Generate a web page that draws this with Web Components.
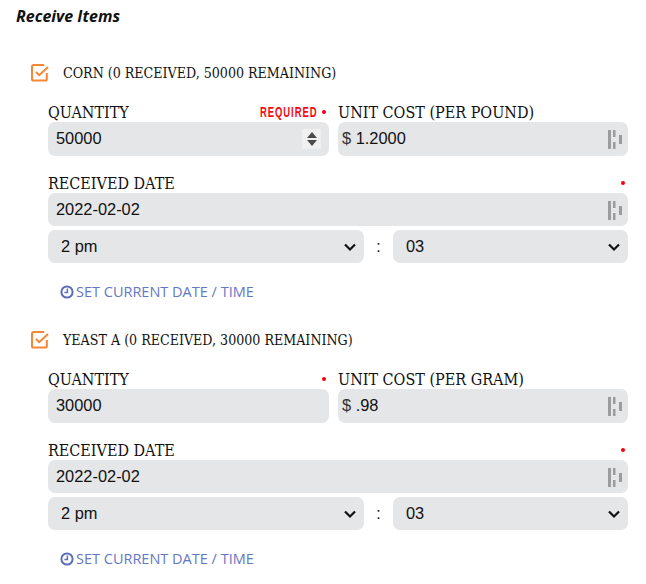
<!DOCTYPE html>
<html>
<head>
<meta charset="utf-8">
<title>Receive Items</title>
<style>
  html, body { margin: 0; background: #fff; }
  body { width: 646px; height: 584px; overflow: hidden; }
</style>
</head>
<body>
<receive-form heading="Receive Items">
  <receive-item name="CORN (0 RECEIVED, 50000 REMAINING)" qty="50000" cost="1.2000" unit="UNIT COST (PER POUND)" required-note spinner></receive-item>
  <receive-item name="YEAST A (0 RECEIVED, 30000 REMAINING)" qty="30000" cost=".98" unit="UNIT COST (PER GRAM)"></receive-item>
</receive-form>

<script>
const SLAB = `"DejaVu Serif", serif`;
const keyIcon = `<svg class="key" width="15" height="19" viewBox="0 0 15 19"><g fill="#9c9c9c"><rect x="0" y="0" width="3" height="19"/><rect x="5" y="0" width="2.5" height="7"/><rect x="5" y="12" width="2.5" height="7"/><rect x="11" y="5" width="3" height="9"/></g></svg>`;

class FieldLabel extends HTMLElement {
  constructor() {
    super();
    this.attachShadow({ mode: 'open' });
    this.shadowRoot.innerHTML = `
      <style>
        :host { display: flex; justify-content: space-between; align-items: center; height: 20px; }
        .name { margin-top: 2px; font: 16px/20px ${SLAB}; font-stretch: condensed; color: #111; white-space: nowrap; }
        .req { display: flex; align-items: center; gap: 4px; padding-right: 3px; color: #f50a14; }
        .note { display: inline-block; font: 700 15.5px/20px "Liberation Sans", sans-serif; letter-spacing: 1.6px; transform: scaleX(.61); transform-origin: right center; }
        .dot { width: 4px; height: 4px; border-radius: 50%; background: #f5000a; }
      </style>
      <span class="name"><slot></slot></span>
      <span class="req"></span>
    `;
  }

  connectedCallback() {
    const req = this.shadowRoot.querySelector('.req');
    if (this.hasAttribute('note')) {
      req.innerHTML = `<span class="note">${this.getAttribute('note')}</span><span class="dot"></span>`;
    } else if (this.hasAttribute('dot')) {
      req.innerHTML = `<span class="dot"></span>`;
    }
  }
}

class FieldBox extends HTMLElement {
  constructor() {
    super();
    this.attachShadow({ mode: 'open' });
    this.shadowRoot.innerHTML = `
      <style>
        :host {
          display: flex; align-items: center; justify-content: space-between;
          box-sizing: border-box; height: 33px; padding: 0 8px;
          background: #e5e6e8; border-radius: 7px;
          font: 16.4px "Liberation Sans", sans-serif; color: #111;
        }
        :host([tall]) { height: 34px; padding-bottom: 2px; }
        :host([select]) { padding-left: 13px; }
        :host([money]) { padding-left: 4px; }
        .end { display: flex; align-items: center; }
        .spin { display: flex; flex-direction: column; align-items: center; justify-content: center; gap: 2px; width: 19px; height: 20px; background: #f0f0f0; margin-top: 2px; }
        .up, .down { width: 0; height: 0; border-left: 5px solid transparent; border-right: 5px solid transparent; }
        .up { border-bottom: 6px solid #4b4b4b; }
        .down { border-top: 6px solid #4b4b4b; }
        .key { display: block; margin: 2px -3px 0 0; }
        .chev { display: block; margin: 0 -2px 0 0; }
      </style>
      <span><slot></slot></span>
      <span class="end"></span>
    `;
  }

  connectedCallback() {
    const end = this.shadowRoot.querySelector('.end');
    if (this.hasAttribute('spinner')) {
      end.innerHTML = `<span class="spin"><span class="up"></span><span class="down"></span></span>`;
    } else if (this.hasAttribute('select')) {
      end.innerHTML = `<svg class="chev" width="16" height="16" viewBox="0 0 16 16"><path d="M3 5.5l5 5 5-5" fill="none" stroke="#111" stroke-width="2.2"/></svg>`;
    } else if (this.hasAttribute('key')) {
      end.innerHTML = keyIcon;
    }
  }
}

class ReceiveItem extends HTMLElement {
  constructor() {
    super();
    this.attachShadow({ mode: 'open' });
  }

  connectedCallback() {
    const a = (n) => this.getAttribute(n);
    const note = this.hasAttribute('required-note') ? 'note="REQUIRED"' : 'dot';
    const spin = this.hasAttribute('spinner') ? 'spinner' : '';
    this.shadowRoot.innerHTML = `
      <style>
        :host { display: block; padding-left: 31px; margin-bottom: 28px; }
        .head { display: flex; align-items: center; gap: 14px; height: 20px; font: 14.1px/20px ${SLAB}; font-stretch: condensed; color: #111; white-space: nowrap; }
        .head svg { display: block; }
        .body { margin: 19px 18px 0 17px; }
        .pair { display: grid; grid-template-columns: 281px 290px; column-gap: 9px; }
        .date { margin-top: 17px; }
        .time { display: grid; grid-template-columns: 316px 29px 235px; margin-top: 4px; }
        .colon { display: flex; align-items: center; justify-content: center; font: 16px "Liberation Sans", sans-serif; color: #111; }
        .now { display: flex; align-items: center; gap: 2px; margin: 19px 0 0 12px; height: 20px; font: 14.5px/20px "Open Sans", sans-serif; color: #6577c4; white-space: nowrap; }
        .now svg { display: block; }
        .cost { color: #333; }
      </style>
      <div class="head">
        <svg width="18" height="18" viewBox="0 0 18 18" fill="none" stroke="#f58634" stroke-width="2">
          <path d="M15.8 9v6a1.6 1.6 0 0 1-1.6 1.6H2.6A1.6 1.6 0 0 1 1 15V2.6A1.6 1.6 0 0 1 2.6 1h10.6"/>
          <path d="M5 8l3.2 3.2L17 3" stroke-width="2"/>
        </svg>
        <span>${a('name')}</span>
      </div>
      <div class="body">
        <div class="pair">
          <div>
            <field-label ${note}>QUANTITY</field-label>
            <field-box tall ${spin}>${a('qty')}</field-box>
          </div>
          <div>
            <field-label>${a('unit')}</field-label>
            <field-box tall key money><span class="cost">$</span> ${a('cost')}</field-box>
          </div>
        </div>
        <div class="date">
          <field-label dot>RECEIVED DATE</field-label>
          <field-box key>2022-02-02</field-box>
        </div>
        <div class="time">
          <field-box select>2 pm</field-box>
          <span class="colon">:</span>
          <field-box select>03</field-box>
        </div>
        <div class="now">
          <svg width="14" height="14" viewBox="0 0 14 14" fill="none" stroke="#5a6fb5" stroke-width="2">
            <circle cx="7" cy="7" r="5.6"/><path d="M7.4 3.6v3.8H4.4" stroke-width="1.5"/>
          </svg>
          <span>SET CURRENT DATE / TIME</span>
        </div>
      </div>
    `;
  }
}

class ReceiveForm extends HTMLElement {
  constructor() {
    super();
    this.attachShadow({ mode: 'open' });
    this.shadowRoot.innerHTML = `
      <style>
        :host { display: block; }
        h2 { margin: 0 0 37px; padding: 6px 0 0 16px; font: italic 700 16px/20px "Open Sans", sans-serif; color: #111; }
      </style>
      <h2></h2>
      <slot></slot>
    `;
  }

  connectedCallback() {
    this.shadowRoot.querySelector('h2').textContent = this.getAttribute('heading');
  }
}

customElements.define('field-label', FieldLabel);
customElements.define('field-box', FieldBox);
customElements.define('receive-item', ReceiveItem);
customElements.define('receive-form', ReceiveForm);
</script>
</body>
</html>
